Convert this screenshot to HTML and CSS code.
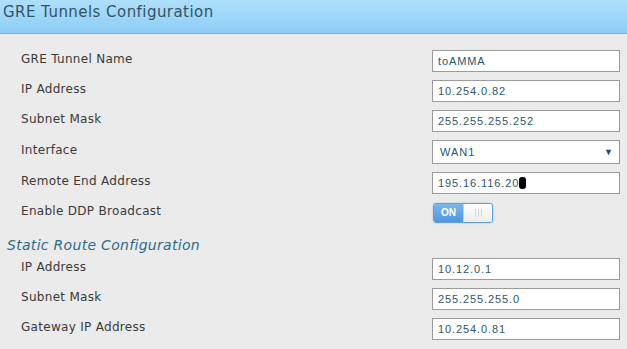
FILE: index.html
```html
<!DOCTYPE html>
<html lang="en">
<head>
    <meta charset="UTF-8">
    <title>GRE Tunnels Configuration</title>
    <link rel="stylesheet" href="styles.css">
</head>
<body>
    <div class="page-header">
        <h1 class="page-title">GRE Tunnels Configuration</h1>
    </div>

    <div class="config-form">
        <div class="form-row">
            <span class="field-label">GRE Tunnel Name</span>
            <input class="field-input" type="text" value="toAMMA">
        </div>
        <div class="form-row">
            <span class="field-label">IP Address</span>
            <input class="field-input" type="text" value="10.254.0.82">
        </div>
        <div class="form-row">
            <span class="field-label">Subnet Mask</span>
            <input class="field-input" type="text" value="255.255.255.252">
        </div>
        <div class="form-row select-row">
            <span class="field-label">Interface</span>
            <div class="field-select">
                <span>WAN1</span>
                <span class="select-arrow">&#9660;</span>
            </div>
        </div>
        <div class="form-row">
            <span class="field-label">Remote End Address</span>
            <div class="field-input field-fake">195.16.116.20<span class="cursor-block"></span></div>
        </div>
        <div class="form-row">
            <span class="field-label">Enable DDP Broadcast</span>
            <div class="toggle">
                <span class="toggle-on">ON</span>
                <span class="toggle-knob"><i></i><i></i><i></i></span>
            </div>
        </div>

        <h2 class="section-title">Static Route Configuration</h2>

        <div class="form-row">
            <span class="field-label">IP Address</span>
            <input class="field-input" type="text" value="10.12.0.1">
        </div>
        <div class="form-row">
            <span class="field-label">Subnet Mask</span>
            <input class="field-input" type="text" value="255.255.255.0">
        </div>
        <div class="form-row">
            <span class="field-label">Gateway IP Address</span>
            <input class="field-input" type="text" value="10.254.0.81">
        </div>
    </div>
</body>
</html>
```

FILE: styles.css
```css
body {
    margin: 0;
    background-color: #ebebeb;
    font-family: "DejaVu Sans", sans-serif;
    color: #333;
}

.page-header {
    height: 33px;
    background: linear-gradient(to bottom, #aee0fc, #8dcdf5);
    border-bottom: 1px solid #8fa9bb;
    padding-left: 3px;
}

.page-title {
    margin: 0;
    font-size: 15px;
    font-weight: normal;
    line-height: 25px;
    letter-spacing: 0.45px;
    color: #36525f;
}

.config-form {
    padding: 12px 7px 0 21px;
}

.form-row {
    display: flex;
    align-items: center;
    height: 30px;
}

.select-row {
    height: 32px;
}

.field-label {
    margin-bottom: 4px;
    font-size: 12px;
    letter-spacing: 0.3px;
    color: #3a3a3a;
}

.field-input {
    margin-left: auto;
    width: 188px;
    height: 22px;
    box-sizing: border-box;
    border: 1px solid #9b9b9b;
    background: #fff;
    padding: 0 0 0 5px;
    font-family: "Liberation Sans", Arial, sans-serif;
    font-size: 11px;
    letter-spacing: 0.9px;
    color: #2e5868;
    outline: none;
}

.field-fake {
    display: flex;
    align-items: center;
}

.cursor-block {
    display: inline-block;
    width: 7px;
    height: 12px;
    background: #000;
    border-radius: 3px;
}

.field-select {
    margin-left: auto;
    width: 188px;
    height: 24px;
    box-sizing: border-box;
    border: 1px solid #9b9b9b;
    background: #fff;
    padding: 0 6px 0 7px;
    display: flex;
    align-items: center;
    justify-content: space-between;
    font-family: "Liberation Sans", Arial, sans-serif;
    font-size: 11px;
    letter-spacing: 1px;
    color: #2e5868;
}

.select-arrow {
    font-size: 9px;
    letter-spacing: 0;
    color: #1f4a66;
}

.toggle {
    margin-left: auto;
    margin-right: 127px;
    width: 60px;
    height: 20px;
    box-sizing: border-box;
    border: 1px solid #5f9fd8;
    border-radius: 3px;
    display: flex;
    overflow: hidden;
    box-shadow: 0 0 2px rgba(90, 150, 210, 0.5);
}

.toggle-on {
    width: 29px;
    background: linear-gradient(to bottom, #7bb8ec, #4f96dd);
    color: #fff;
    font-family: "Liberation Sans", Arial, sans-serif;
    font-size: 10px;
    font-weight: bold;
    line-height: 18px;
    text-align: center;
}

.toggle-knob {
    flex: 1;
    background: linear-gradient(to bottom, #ffffff, #ececec);
    border-left: 1px solid #b9cfe2;
    border-radius: 2px;
    display: flex;
    justify-content: center;
    align-items: center;
    gap: 2px;
}

.toggle-knob i {
    width: 1px;
    height: 8px;
    background: #d4d4d4;
}

.section-title {
    margin: 0;
    margin-left: -14px;
    padding-top: 7px;
    height: 26px;
    box-sizing: border-box;
    font-size: 14px;
    font-weight: normal;
    font-style: italic;
    line-height: 20px;
    letter-spacing: 0.3px;
    color: #2b6c8c;
}
```
